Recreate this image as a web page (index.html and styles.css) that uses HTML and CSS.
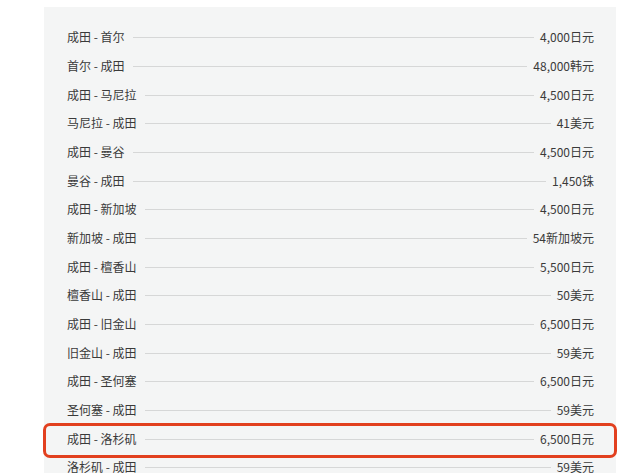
FILE: index.html
```html
<!DOCTYPE html>
<html lang="zh-CN">
<head>
<meta charset="utf-8">
<link rel="stylesheet" href="styles.css">
</head>
<body>
<div class="panel">
  <div class="row"><span class="route">成田 - 首尔</span><span class="rule"></span><span class="price">4,000日元</span></div>
  <div class="row"><span class="route">首尔 - 成田</span><span class="rule"></span><span class="price">48,000韩元</span></div>
  <div class="row"><span class="route">成田 - 马尼拉</span><span class="rule"></span><span class="price">4,500日元</span></div>
  <div class="row"><span class="route">马尼拉 - 成田</span><span class="rule"></span><span class="price">41美元</span></div>
  <div class="row"><span class="route">成田 - 曼谷</span><span class="rule"></span><span class="price">4,500日元</span></div>
  <div class="row"><span class="route">曼谷 - 成田</span><span class="rule"></span><span class="price">1,450铢</span></div>
  <div class="row"><span class="route">成田 - 新加坡</span><span class="rule"></span><span class="price">4,500日元</span></div>
  <div class="row"><span class="route">新加坡 - 成田</span><span class="rule"></span><span class="price">54新加坡元</span></div>
  <div class="row"><span class="route">成田 - 檀香山</span><span class="rule"></span><span class="price">5,500日元</span></div>
  <div class="row"><span class="route">檀香山 - 成田</span><span class="rule"></span><span class="price">50美元</span></div>
  <div class="row"><span class="route">成田 - 旧金山</span><span class="rule"></span><span class="price">6,500日元</span></div>
  <div class="row"><span class="route">旧金山 - 成田</span><span class="rule"></span><span class="price">59美元</span></div>
  <div class="row"><span class="route">成田 - 圣何塞</span><span class="rule"></span><span class="price">6,500日元</span></div>
  <div class="row"><span class="route">圣何塞 - 成田</span><span class="rule"></span><span class="price">59美元</span></div>
  <div class="row highlight"><span class="route">成田 - 洛杉矶</span><span class="rule"></span><span class="price">6,500日元</span></div>
  <div class="row"><span class="route">洛杉矶 - 成田</span><span class="rule"></span><span class="price">59美元</span></div>
  <div class="watermark">头条 安网</div>
</div>
</body>
</html>
```
FILE: styles.css
```css
html, body {
  margin: 0;
  padding: 0;
  background: #ffffff;
  overflow: hidden;
}
body {
  font-family: "Noto Sans CJK SC", "Noto Sans", sans-serif;
  font-size: 12px;
  color: #3a3a3a;
}
.panel {
  position: relative;
  margin: 7px 24px 0 44px;
  width: 572px;
  box-sizing: border-box;
  padding: 16px 22px 40px 23px;
  background: #f4f5f5;
}
.row {
  position: relative;
  display: flex;
  align-items: center;
  height: 28.67px;
}
.route, .price {
  white-space: nowrap;
  line-height: 16px;
}
.rule {
  flex: 1;
  height: 1px;
  background: #d6d7d7;
  margin: 1px 6px 0 8px;
}
.highlight::before {
  content: "";
  position: absolute;
  left: -24px;
  right: -23px;
  top: -1px;
  bottom: -5px;
  border: 3px solid #e2401f;
  border-radius: 7px;
}
.watermark {
  position: absolute;
  right: -12px;
  bottom: 3px;
  font-size: 11px;
  color: #c8c8c8;
  opacity: 0.6;
}
```
